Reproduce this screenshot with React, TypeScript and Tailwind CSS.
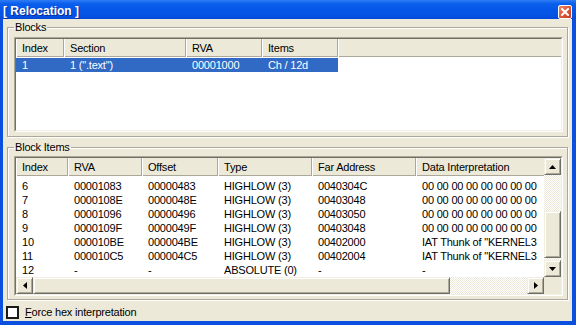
import React from "react";

type Col = { label: string; w: number };

const blockCols: Col[] = [
  { label: "Index", w: 48 },
  { label: "Section", w: 122 },
  { label: "RVA", w: 76 },
  { label: "Items", w: 76 },
];

const itemCols: Col[] = [
  { label: "Index", w: 52 },
  { label: "RVA", w: 74 },
  { label: "Offset", w: 76 },
  { label: "Type", w: 94 },
  { label: "Far Address", w: 104 },
  { label: "Data Interpretation", w: 160 },
];

const Z = "00 00 00 00 00 00 00 00";
const itemRows: string[][] = [
  ["6", "00001083", "00000483", "HIGHLOW (3)", "0040304C", Z],
  ["7", "0000108E", "0000048E", "HIGHLOW (3)", "00403048", Z],
  ["8", "00001096", "00000496", "HIGHLOW (3)", "00403050", Z],
  ["9", "0000109F", "0000049F", "HIGHLOW (3)", "00403048", Z],
  ["10", "000010BE", "000004BE", "HIGHLOW (3)", "00402000", 'IAT Thunk of "KERNEL3'],
  ["11", "000010C5", "000004C5", "HIGHLOW (3)", "00402004", 'IAT Thunk of "KERNEL3'],
  ["12", "-", "-", "ABSOLUTE (0)", "-", "-"],
];

function Header({ cols }: { cols: Col[] }) {
  return (
    <div className="flex h-[18px] shrink-0 bg-[#ECE9D8] shadow-[inset_0_-1px_0_#ACA899]">
      {cols.map((c) => (
        <div
          key={c.label}
          className="flex items-center pl-[6px] shrink-0 whitespace-nowrap overflow-hidden shadow-[inset_-1px_0_0_#ACA899,inset_1px_0_0_#fff]"
          style={{ width: c.w }}
        >
          {c.label}
        </div>
      ))}
      <div className="flex-1 shadow-[inset_1px_0_0_#fff,inset_0_-1px_0_#ACA899]" />
    </div>
  );
}

function Row({ cols, cells, selected }: { cols: Col[]; cells: string[]; selected?: boolean }) {
  return (
    <div className={"flex h-[14px] shrink-0 " + (selected ? "bg-[#316AC5] text-white self-start" : "")}>
      {cols.map((c, i) => (
        <div
          key={i}
          className="flex items-center pl-[6px] shrink-0 whitespace-nowrap overflow-hidden"
          style={{ width: c.w }}
        >
          {cells[i]}
        </div>
      ))}
    </div>
  );
}

function Arrow({ dir }: { dir: "up" | "down" | "left" | "right" }) {
  const pts =
    dir === "up"
      ? "0,4 7,4 3.5,0"
      : dir === "down"
      ? "0,0 7,0 3.5,4"
      : dir === "left"
      ? "4,0 4,7 0,3.5"
      : "0,0 0,7 4,3.5";
  const w = dir === "up" || dir === "down" ? 7 : 4;
  const h = dir === "up" || dir === "down" ? 4 : 7;
  return (
    <svg width={w} height={h} viewBox={`0 0 ${w} ${h}`}>
      <polygon points={pts} fill="#000" />
    </svg>
  );
}

function SBtn({ dir }: { dir: "up" | "down" | "left" | "right" }) {
  return (
    <div className="w-[17px] h-[17px] shrink-0 flex items-center justify-center bg-[#ECE9D8] border border-t-[#F1EFE2] border-l-[#F1EFE2] border-r-[#716F64] border-b-[#716F64] shadow-[inset_1px_1px_0_#fff,inset_-1px_-1px_0_#ACA899]">
      <Arrow dir={dir} />
    </div>
  );
}

const track =
  "bg-[repeating-conic-gradient(#ECE9D8_0_25%,#ffffff_0_50%)] bg-[length:2px_2px]";
const thumb =
  "bg-[#ECE9D8] border border-t-[#F1EFE2] border-l-[#F1EFE2] border-r-[#716F64] border-b-[#716F64] shadow-[inset_1px_1px_0_#fff,inset_-1px_-1px_0_#ACA899]";

function Sunken({ children, className = "" }: { children: React.ReactNode; className?: string }) {
  return (
    <div className={"shrink-0 flex border border-t-[#ACA899] border-l-[#ACA899] border-r-white border-b-white " + className}>
      <div className="flex-1 flex flex-col border border-t-[#716F64] border-l-[#716F64] border-r-[#F1EFE2] border-b-[#F1EFE2] bg-white overflow-hidden">
        {children}
      </div>
    </div>
  );
}

export default function App() {
  return (
    <div className="w-[576px] h-[325px] flex flex-col bg-[#0A4FDF] font-['Liberation_Sans',Arial,sans-serif] text-[11px] leading-[13px] tracking-[-0.2px] text-black overflow-hidden">
      {/* Title bar */}
      <div className="h-[19px] shrink-0 flex items-start justify-between pl-[3px] pr-[4px] pt-[4px] bg-[linear-gradient(to_bottom,#2F7CF4_0%,#0A5EEC_20%,#0556E8_55%,#0452E2_85%,#0347D6_100%)]">
        <div className="text-white font-bold text-[12px] leading-[14px] tracking-normal [text-shadow:1px_1px_0_#0A2A9A]">
          [ Relocation ]
        </div>
        <div className="w-[14px] h-[14px] mt-[1px] rounded-[2px] border border-white bg-[linear-gradient(135deg,#EE8C6C_0%,#DD5B3A_45%,#C8401F_100%)] flex items-center justify-center">
          <svg width="8" height="8" viewBox="0 0 8 8">
            <path d="M1 1 L7 7 M7 1 L1 7" stroke="#fff" strokeWidth="2" strokeLinecap="square" />
          </svg>
        </div>
      </div>

      {/* Client area */}
      <div className="flex-1 ml-[3px] mr-[4px] mb-[4px] bg-[#ECE9D8] flex flex-col pt-[2px] px-[4px]">
        {/* Blocks */}
        <fieldset className="h-[116px] shrink-0 border border-[#ACA899] shadow-[inset_1px_1px_0_#fff,1px_1px_0_#fff] pl-[6px] pr-[4px] pb-[4px]">
          <legend className="px-[1px] leading-[13px]">Blocks</legend>
          <Sunken className="mt-[3px] h-[95px]">
            <Header cols={blockCols} />
            <div className="h-[1px] shrink-0" />
            <Row cols={blockCols} cells={["1", '1 (".text")', "00001000", "Ch / 12d"]} selected />
          </Sunken>
        </fieldset>

        {/* Block Items */}
        <fieldset className="mt-[4px] h-[159px] shrink-0 border border-[#ACA899] shadow-[inset_1px_1px_0_#fff,1px_1px_0_#fff] pl-[6px] pr-[4px] pb-[3px]">
          <legend className="px-[1px] leading-[13px]">Block Items</legend>
          <Sunken className="mt-[2px] h-[140px]">
            <div className="flex-1 grid grid-cols-[1fr_17px] grid-rows-[1fr_17px]">
              <div className="flex flex-col overflow-hidden">
                <Header cols={itemCols} />
                <div className="h-[3px] shrink-0" />
                {itemRows.map((r, i) => (
                  <Row key={i} cols={itemCols} cells={r} />
                ))}
              </div>
              <div className="flex flex-col">
                <SBtn dir="up" />
                <div className={"h-[36px] shrink-0 " + track} />
                <div className={"h-[47px] shrink-0 " + thumb} />
                <div className={"flex-1 " + track} />
                <SBtn dir="down" />
              </div>
              <div className="flex">
                <SBtn dir="left" />
                <div className={"w-[417px] shrink-0 " + thumb} />
                <div className={"flex-1 " + track} />
                <SBtn dir="right" />
              </div>
              <div className="bg-[#ECE9D8]" />
            </div>
          </Sunken>
        </fieldset>

        {/* Checkbox */}
        <div className="mt-[6px] flex items-center -ml-[1px]">
          <div className="w-[13px] h-[13px] border-2 border-[#1a1a1a] bg-white" />
          <span className="ml-[6px]">
            <span className="underline">F</span>orce hex interpretation
          </span>
        </div>
      </div>
    </div>
  );
}
